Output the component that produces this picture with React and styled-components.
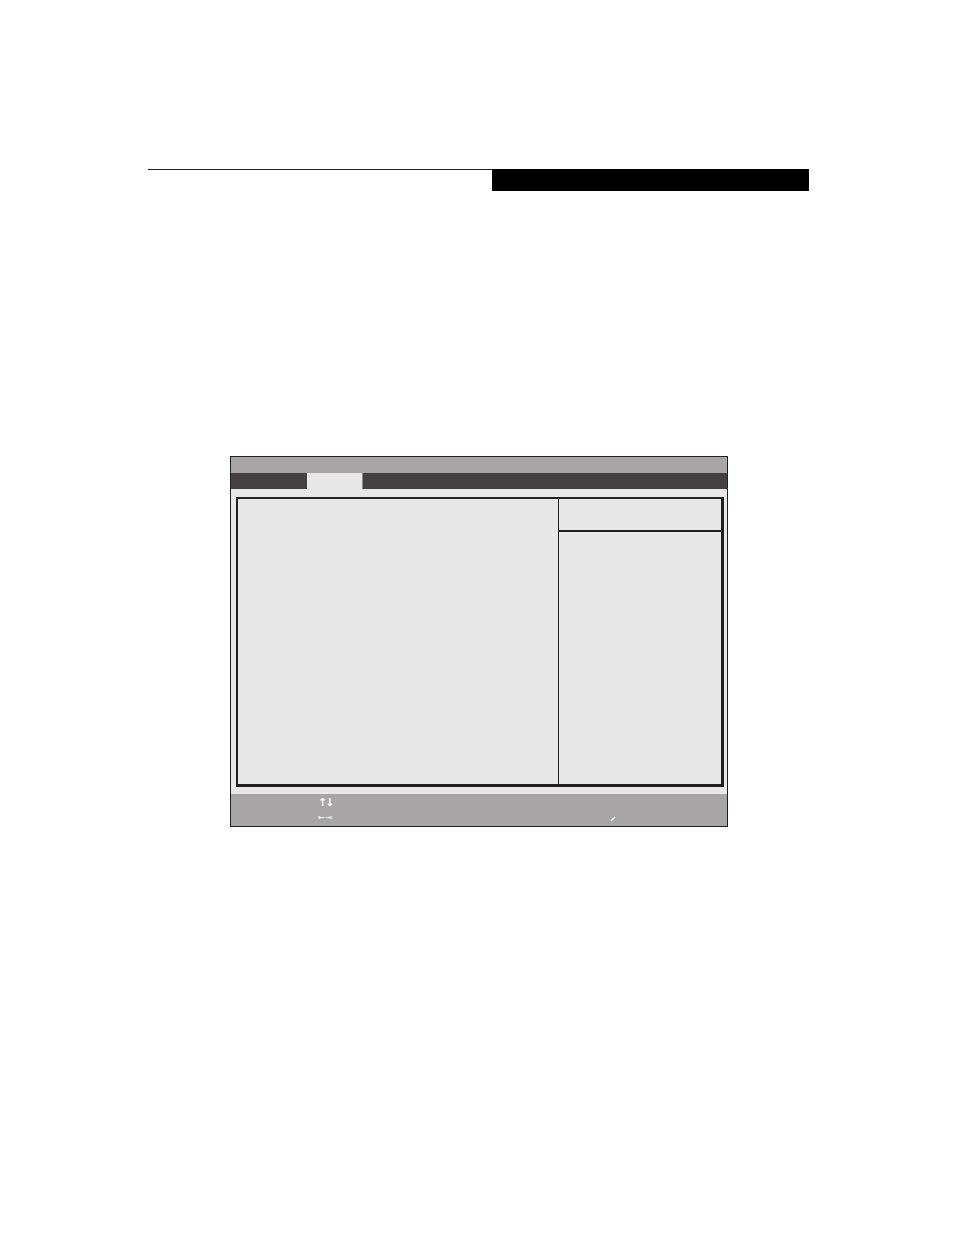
import React from "react";
import styled, { createGlobalStyle } from "styled-components";

const GlobalStyle = createGlobalStyle`
  html, body {
    margin: 0;
    padding: 0;
    background: #ffffff;
    font-family: "Liberation Sans", Arial, sans-serif;
  }
`;

const Page = styled.div`
  width: 954px;
  height: 1235px;
  padding-top: 169px;
  box-sizing: border-box;
`;

const Header = styled.div`
  display: flex;
  margin-left: 148px;
  width: 661px;
`;

const HeaderRule = styled.div`
  flex: 1;
  border-top: 1px solid #231f20;
`;

const HeaderBar = styled.div`
  width: 317px;
  height: 22px;
  background: #000000;
`;

const Frame = styled.div`
  margin: 265px 0 0 230px;
  width: 496px;
  border: 1px solid #231f20;
  display: flex;
  flex-direction: column;
`;

const TitleBar = styled.div`
  height: 16px;
  background: #a7a5a6;
`;

const MenuBar = styled.div`
  height: 16px;
  background: #454142;
  display: flex;
  padding-left: 76px;
`;

const Tab = styled.div`
  width: 55px;
  background: ${(p) => (p.active ? "#e8e8e8" : "transparent")};
  border-right: 1px solid ${(p) => (p.active ? "#8d8b8c" : "transparent")};
`;

const Body = styled.div`
  height: 305px;
  background: #e8e8e8;
  padding: 8px 3px 7px 5px;
  box-sizing: border-box;
`;

const Panel = styled.div`
  height: 100%;
  box-sizing: border-box;
  border: 2px solid #231f20;
  border-right-width: 3px;
  border-bottom-width: 3px;
  display: flex;
`;

const MainPane = styled.div`
  width: 320px;
  border-right: 1px solid #231f20;
`;

const HelpPane = styled.div`
  flex: 1;
  display: flex;
  flex-direction: column;
`;

const HelpTitle = styled.div`
  height: 31px;
  border-bottom: 2px solid #231f20;
`;

const Footer = styled.div`
  height: 32px;
  background: #a7a5a6;
  display: grid;
  grid-template-rows: 15px 15px;
  padding: 1px 0 0 87px;
  box-sizing: border-box;
  color: #ffffff;
`;

const FooterRow = styled.div`
  display: flex;
  align-items: center;
`;

const Keys = styled.span`
  width: 14px;
  font-family: "DejaVu Sans", sans-serif;
  font-size: ${(p) => p.size || 11}px;
  font-weight: bold;
  letter-spacing: ${(p) => p.spacing}px;
  line-height: 1;
  white-space: nowrap;
`;

const Mark = styled.svg`
  margin-left: 278px;
  margin-top: 3px;
`;

export default function App() {
  return (
    <>
      <GlobalStyle />
      <Page>
        <Header>
          <HeaderRule />
          <HeaderBar />
        </Header>
        <Frame>
          <TitleBar />
          <MenuBar>
            <Tab active />
          </MenuBar>
          <Body>
            <Panel>
              <MainPane />
              <HelpPane>
                <HelpTitle />
              </HelpPane>
            </Panel>
          </Body>
          <Footer>
            <FooterRow>
              <Keys spacing={-2}>↑↓</Keys>
            </FooterRow>
            <FooterRow>
              <Keys size={8} spacing={1}>←→</Keys>
              <Mark width="6" height="6" viewBox="0 0 6 6">
                <path d="M1 5 L5 1" stroke="#ffffff" strokeWidth="1.4" />
              </Mark>
            </FooterRow>
          </Footer>
        </Frame>
      </Page>
    </>
  );
}
